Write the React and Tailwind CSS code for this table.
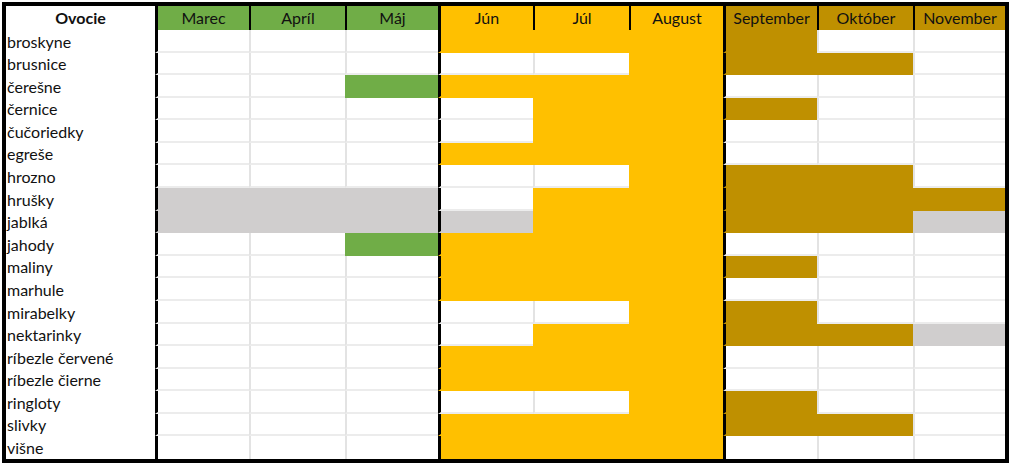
import React from 'react';

const months = [
    { name: 'Marec', head: 'bg-[#70ad47]', thick: true },
    { name: 'Apríl', head: 'bg-[#70ad47]', thick: false },
    { name: 'Máj', head: 'bg-[#70ad47]', thick: false },
    { name: 'Jún', head: 'bg-[#ffc000]', thick: true },
    { name: 'Júl', head: 'bg-[#ffc000]', thick: false },
    { name: 'August', head: 'bg-[#ffc000]', thick: false },
    { name: 'September', head: 'bg-[#bf9000]', thick: true },
    { name: 'Október', head: 'bg-[#bf9000]', thick: false },
    { name: 'November', head: 'bg-[#bf9000]', thick: false },
];

// W = biela, G = zelená, Y = žltá, D = tmavá zlatá, S = sivá
const fills = {
    W: { bg: 'bg-white', bl: 'border-l-[#e3e3e3]', bb: 'border-b-[#ececec]' },
    G: { bg: 'bg-[#70ad47]', bl: 'border-l-[#70ad47]', bb: 'border-b-[#70ad47]' },
    Y: { bg: 'bg-[#ffc000]', bl: 'border-l-[#ffc000]', bb: 'border-b-[#ffc000]' },
    D: { bg: 'bg-[#bf9000]', bl: 'border-l-[#bf9000]', bb: 'border-b-[#bf9000]' },
    S: { bg: 'bg-[#d0cece]', bl: 'border-l-[#d0cece]', bb: 'border-b-[#d0cece]' },
};

const rows = [
    ['broskyne', 'WWWYYYDWW'],
    ['brusnice', 'WWWWWYDDW'],
    ['čerešne', 'WWGYYYWWW'],
    ['černice', 'WWWWYYDWW'],
    ['čučoriedky', 'WWWWYYWWW'],
    ['egreše', 'WWWYYYWWW'],
    ['hrozno', 'WWWWWYDDW'],
    ['hrušky', 'SSSWYYDDD'],
    ['jablká', 'SSSSYYDDS'],
    ['jahody', 'WWGYYYWWW'],
    ['maliny', 'WWWYYYDWW'],
    ['marhule', 'WWWYYYWWW'],
    ['mirabelky', 'WWWWWYDWW'],
    ['nektarinky', 'WWWWYYDDS'],
    ['ríbezle červené', 'WWWYYYWWW'],
    ['ríbezle čierne', 'WWWYYYWWW'],
    ['ringloty', 'WWWWWYDWW'],
    ['slivky', 'WWWYYYDDW'],
    ['višne', 'WWWYYYWWW'],
];

const cols = 'grid-cols-[149px_94px_96px_93px_95px_96px_94px_94px_96px_92px]';

export default function App() {
    return (
        <div className="w-[1013px] h-[466px] bg-white pl-[2px] pt-[2px] font-['Lato','Open_Sans',sans-serif] text-[16px] text-[#111]">
            <div className="w-[1007px] border-4 border-black">
                {/* Hlavička */}
                <div className={`grid ${cols} h-[24px] border-b-4 border-black`}>
                    <div className="flex items-end justify-center pb-[1px] font-bold bg-white">Ovocie</div>
                    {months.map((m) => (
                        <div
                            key={m.name}
                            className={`flex items-end justify-center pb-[1px] border-black ${m.thick ? 'border-l-[3px]' : 'border-l-2'} ${m.head}`}
                        >
                            {m.name}
                        </div>
                    ))}
                </div>

                {/* Riadky */}
                <div className={`grid ${cols} grid-rows-[repeat(19,minmax(0,1fr))] h-[429px]`}>
                    {rows.map(([name, data], r) => (
                        <React.Fragment key={name}>
                            <div className="flex items-end pl-[1px] pb-[1px] leading-none bg-white">
                                <span className="pb-[2px]">{name}</span>
                            </div>
                            {data.split('').map((c, i) => {
                                const f = fills[c];
                                const last = r === rows.length - 1;
                                return (
                                    <div
                                        key={i}
                                        className={[
                                            f.bg,
                                            months[i].thick ? 'border-l-[3px] border-l-black' : `border-l-2 ${f.bl}`,
                                            last ? '' : `border-b-2 ${f.bb}`,
                                        ].join(' ')}
                                    />
                                );
                            })}
                        </React.Fragment>
                    ))}
                </div>
            </div>
        </div>
    );
}
